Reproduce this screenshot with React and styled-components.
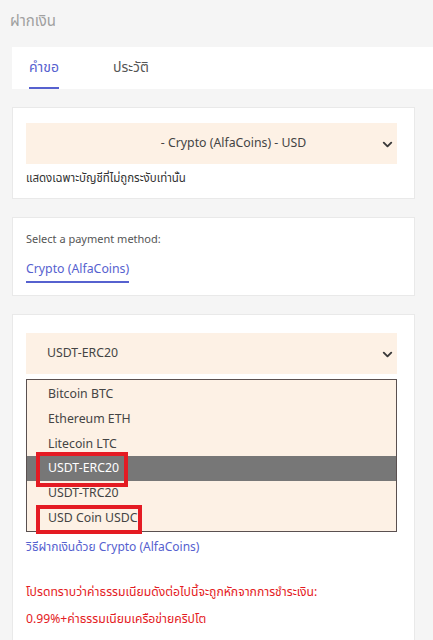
import styled, { createGlobalStyle } from 'styled-components';
import { ChevronDown } from 'lucide-react';

const coins = [
  { name: 'Bitcoin BTC' },
  { name: 'Ethereum ETH' },
  { name: 'Litecoin LTC' },
  { name: 'USDT-ERC20', active: true, mark: { top: -4, bottom: -6, width: 92 } },
  { name: 'USDT-TRC20' },
  { name: 'USD Coin USDC', mark: { top: -1, bottom: -3, width: 106 } },
];

const App = () => (
  <>
    <GlobalStyle />
    <Page>
      <Title>ฝากเงิน</Title>
      <TabsCard>
        <Tab $active>คำขอ</Tab>
        <Tab>ประวัติ</Tab>
      </TabsCard>

      <Card $pt={15} $pb={10}>
        <Select $center>
          <span>- Crypto (AlfaCoins) - USD</span>
          <ChevronDown size={15} strokeWidth={3} />
        </Select>
        <Hint>แสดงเฉพาะบัญชีที่ไม่ถูกระงับเท่านั้น</Hint>
      </Card>

      <Card $pt={15} $pb={12}>
        <Label>Select a payment method:</Label>
        <Method>Crypto (AlfaCoins)</Method>
      </Card>

      <Card $pt={18} $pb={20}>
        <Select>
          <span>USDT-ERC20</span>
          <ChevronDown size={15} strokeWidth={3} />
        </Select>
        <OptionList>
          {coins.map((coin) => (
            <Option key={coin.name} $active={coin.active}>
              {coin.name}
              {coin.mark && (
                <Mark
                  style={{
                    top: coin.mark.top,
                    bottom: coin.mark.bottom,
                    width: coin.mark.width,
                  }}
                />
              )}
            </Option>
          ))}
        </OptionList>
        <HowTo>วิธีฝากเงินด้วย Crypto (AlfaCoins)</HowTo>
        <Notice>
          <p>โปรดทราบว่าค่าธรรมเนียมดังต่อไปนี้จะถูกหักจากการชำระเงิน:</p>
          <p>0.99%+ค่าธรรมเนียมเครือข่ายคริปโต</p>
        </Notice>
      </Card>
    </Page>
  </>
);

export default App;

const GlobalStyle = createGlobalStyle`
  html, body {
    margin: 0;
    background: #f5f5f5;
    font-family: 'Noto Sans Thai', 'Noto Sans Thai UI', 'Noto Sans', sans-serif;
    color: #333;
  }
  p {
    margin: 0;
  }
`;

const Page = styled.div`
  height: 640px;
  overflow: hidden;
`;

const Title = styled.div`
  padding: 11px 10px 0;
  height: 47px;
  box-sizing: border-box;

  font-size: 15px;
  line-height: 22px;
  color: #a0a0a0;
`;

const TabsCard = styled.div`
  margin-left: 12px;
  height: 42px;
  padding-left: 17px;
  display: flex;
  gap: 54px;

  background: #fff;
`;

const Tab = styled.div`
  height: 42px;
  box-sizing: border-box;
  padding-top: 9px;

  font-size: 14px;
  line-height: 24px;
  color: ${({ $active }) => ($active ? '#5661cf' : '#555')};
  border-bottom: 2px solid ${({ $active }) => ($active ? '#5661cf' : 'transparent')};
`;

const Card = styled.div`
  margin: 18px 18px 0 12px;
  padding: ${({ $pt }) => $pt}px 17px ${({ $pb }) => $pb}px 13px;

  background: #fff;
  border: 1px solid #e9e9e9;
`;

const Select = styled.div`
  height: 41px;
  padding: 1px 2px 0 21px;
  box-sizing: border-box;
  display: flex;
  align-items: center;

  background: #fdf1e5;
  font-size: 12.3px;
  line-height: 20px;
  color: #444;

  span {
    flex: 1;
    text-align: ${({ $center }) => ($center ? 'center' : 'left')};
    padding-left: ${({ $center }) => ($center ? '40px' : '0')};
  }

  svg {
    color: #3a3a3a;
  }
`;

const Hint = styled.div`
  margin-top: 6px;
  font-size: 11.5px;
  line-height: 18px;
  color: #333;
`;

const Label = styled.div`
  font-size: 11px;
  line-height: 14px;
  color: #555;
`;

const Method = styled.div`
  width: fit-content;
  margin-top: 13px;
  padding-bottom: 1px;

  font-size: 12.3px;
  line-height: 20px;
  color: #5661cf;
  border-bottom: 2px solid #5661cf;
`;

const OptionList = styled.div`
  margin-top: 5px;
  padding-top: 2px;

  background: #fdf1e5;
  border: 1px solid #5a5050;
`;

const Option = styled.div`
  position: relative;
  height: 24.8px;
  box-sizing: border-box;
  padding: 2px 0 0 21px;

  font-size: 12.3px;
  line-height: 22.8px;
  color: ${({ $active }) => ($active ? '#fff' : '#444')};
  background: ${({ $active }) => ($active ? '#777' : 'transparent')};
`;

const Mark = styled.span`
  position: absolute;
  left: 9px;
  box-sizing: border-box;

  border: 4px solid #e41b23;
`;

const HowTo = styled.div`
  margin-top: 5px;
  font-size: 12px;
  line-height: 20px;
  color: #5661cf;
`;

const Notice = styled.div`
  margin-top: 22px;

  font-size: 12.2px;
  line-height: 27px;
  color: #e41b23;
`;
